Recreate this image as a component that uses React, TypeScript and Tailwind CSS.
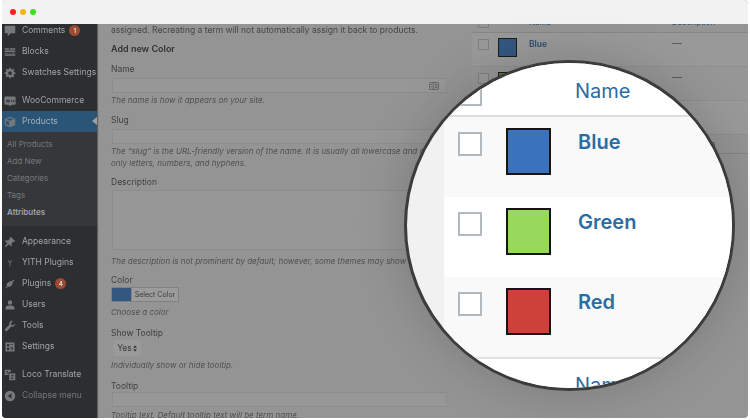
const ui = "[font-family:Inter,'Liberation_Sans',sans-serif]";

function Glyph({ d, dim }: { d: string; dim?: boolean }) {
  return (
    <svg viewBox="0 0 16 16" className={`h-3 w-3 ${dim ? "fill-[#5f6164]" : "fill-[#76797c]"}`}>
      <path d={d} />
    </svg>
  );
}

const icons: Record<string, string> = {
  comments: "M2 1h12a1 1 0 0 1 1 1v8a1 1 0 0 1-1 1H9l-4 4v-4H2a1 1 0 0 1-1-1V2a1 1 0 0 1 1-1z",
  blocks: "M1 3h6v2H1zM8 3h7v2H8zM1 6h14v2H1zM1 9h4v1H1zM6 9h3v1H6zM10 9h5v1h-5zM1 11h14v2H1z",
  gear: "M7 1h2l.4 2 1.3.5 1.7-1.1 1.4 1.4-1.1 1.7.5 1.3 2 .4v2l-2 .4-.5 1.3 1.1 1.7-1.4 1.4-1.7-1.1-1.3.5L9 15H7l-.4-2-1.3-.5-1.7 1.1-1.4-1.4 1.1-1.7-.5-1.3L1 9V7l2-.4.5-1.3-1.1-1.7 1.4-1.4 1.7 1.1L6.600 3zM8 5.500a2.500 2.500 0 1 0 0 5 2.500 2.500 0 0 0 0-5z",
  woo: "M2 2h12a1.500 1.500 0 0 1 1.500 1.500v8A1.500 1.500 0 0 1 14 13h-4l-2 2-2-2H2a1.500 1.500 0 0 1-1.500-1.500v-8A1.500 1.500 0 0 1 2 2zm1 4v4h1l.8-2 .7 2h1L8 6H7l-.7 2-.7-2h-.8L4 8l-.5-2zm6 1v2h2V7zm3 0v2h2V7z",
  box: "M8 1l7 3v8l-7 3-7-3V4zM8 2.600L3.500 4.500 8 6.400l4.500-1.900zM2.500 5.700v5.300L7 13V7.600z",
  pin: "M9 1l6 6-1.500 1-1-.5L10 10l.5 3-1 1-3-3-4 3.500L1 14l3.500-4.500-3-3 1-1 3 .5L8 3.500 7.500 2.500z",
  yith: "M5 4h1.500L8 7l1.500-3H11L8.500 9l.5 1-1.500 3-1-.5L7.500 10z",
  plug: "M13 2l1 1-3 3 1 1-3 4c-1.500 1-3 .8-4 .2L3 14l-1-1 2-2c-.6-1-.8-2.500.2-4l4-3 1 1z",
  user: "M8 1.500a3 3 0 1 1 0 6 3 3 0 0 1 0-6zM2 14v-2c0-2 2-3.500 4-3.500h4c2 0 4 1.500 4 3.500v2z",
  wrench: "M11 1a4 4 0 0 0-3.800 5.200L1.500 12a1.800 1.800 0 0 0 2.500 2.500l5.800-5.700A4 4 0 0 0 15 4.500L12.500 7 10 6.500 9.500 4 12 1.300A4 4 0 0 0 11 1z",
  settings: "M2 2h12v12H2zm2 2v3h3V4zm5 0v1h3V4zM9 7v5h1V7zm2 1v4h1V8zm-7 1v3h3V9z",
  loco: "M1 1h8v3H6v4H1zm2 2v1h1v1H3v1h2V3zM7 6h8v9H7zm2.500 2v1H12L9 12v1h4v-1h-2.500L13 9V8z",
  collapse: "M8 1a7 7 0 1 1 0 14A7 7 0 0 1 8 1zm2 3.500L5 8l5 3.500z",
};

function Badge({ n }: { n: number }) {
  return (
    <span className="ml-[4px] flex h-[11px] w-[11px] items-center justify-center rounded-full bg-[#9c4a30] text-[6px] font-bold text-[#d8d8d8]">
      {n}
    </span>
  );
}

function MenuItem({ icon, label, badge, active, muted, dim }: { icon: string; label: string; badge?: number; active?: boolean; muted?: boolean; dim?: boolean }) {
  return (
    <div className={`relative flex h-[21px] items-center pl-[2px] ${active ? "bg-[#2b5576]" : ""}`}>
      <span className="mr-[6px] flex w-3 justify-center"><Glyph d={icons[icon]} dim={dim} /></span>
      <span className={`whitespace-nowrap text-[8.5px] ${muted ? "text-[#75787b]" : active ? "text-[#a3afb9]" : "text-[#a2a4a6]"}`}>{label}</span>
      {badge ? <Badge n={badge} /> : null}
      {active ? <span className="absolute right-0 top-[6px] border-y-[4px] border-r-[5px] border-y-transparent border-r-[#a0a0a0]" /> : null}
    </div>
  );
}

function Sidebar() {
  return (
    <aside className="w-[95px] shrink-0 overflow-hidden bg-[#2c2e31] shadow-[1px_0_1px_rgba(0,0,0,0.35)]">
      <div className="mt-[-4px]">
        <MenuItem icon="comments" label="Comments" badge={1} />
        <MenuItem icon="blocks" label="Blocks" />
        <MenuItem icon="gear" label="Swatches Settings" />
      </div>
      <div className="mt-[7px]">
        <MenuItem icon="woo" label="WooCommerce" />
        <MenuItem icon="box" label="Products" active />
      </div>
      <div className="flex flex-col bg-[#35373a] pb-[5px] pl-[5px] pt-[4px] text-[8px] leading-[17px] text-[#77797c]">
        <span>All Products</span>
        <span>Add New</span>
        <span>Categories</span>
        <span>Tags</span>
        <span className="font-semibold text-[#a2a4a6]">Attributes</span>
      </div>
      <div className="mt-[5px]">
        <MenuItem icon="pin" label="Appearance" />
        <MenuItem icon="yith" label="YITH Plugins" dim />
        <MenuItem icon="plug" label="Plugins" badge={4} />
        <MenuItem icon="user" label="Users" />
        <MenuItem icon="wrench" label="Tools" />
        <MenuItem icon="settings" label="Settings" />
      </div>
      <div className="mt-[7px]">
        <MenuItem icon="loco" label="Loco Translate" />
        <MenuItem icon="collapse" label="Collapse menu" muted />
      </div>
    </aside>
  );
}

function Label({ children, className = "" }: { children: string; className?: string }) {
  return <div className={`text-[8.5px] leading-[11px] text-[#3f3f3f] ${className}`}>{children}</div>;
}

function Help({ children, className = "" }: { children: string; className?: string }) {
  return <div className={`whitespace-nowrap text-[8px] italic leading-[12px] text-[#505050] ${className}`}>{children}</div>;
}

function Field({ className = "", children }: { className?: string; children?: React.ReactNode }) {
  return <div className={`ml-[1px] flex w-[335px] items-center justify-end border border-[#8d8d8d] bg-[#979797] pr-[7px] ${className}`}>{children}</div>;
}

function Form() {
  return (
    <main className="w-[375px] shrink-0 overflow-hidden pl-[14px] pt-[1px]">
      <div className="whitespace-nowrap text-[8.5px] leading-[11px] text-[#464646]">
        assigned. Recreating a term will not automatically assign it back to products.
      </div>
      <div className="mt-[7px] text-[9px] font-semibold leading-[11px] text-[#333333]">Add new Color</div>
      <Label className="mt-[10px]">Name</Label>
      <Field className="mt-[3px] h-[15px]">
        <svg viewBox="0 0 12 10" className="h-[8px] w-[10px] fill-none stroke-[#555555]"><rect x="0.5" y="0.5" width="11" height="9" rx="1" /><path d="M5 1v8M7 3h3M7 5h3M7 7h3M2 3h1.500M2 6h1.500" /></svg>
      </Field>
      <Help className="mt-[1px]">The name is how it appears on your site.</Help>
      <Label className="mt-[9px]">Slug</Label>
      <Field className="mt-[3px] h-[15px]" />
      <Help className="mt-[1px]">The “slug” is the URL-friendly version of the name. It is usually all lowercase and contains</Help>
      <Help>only letters, numbers, and hyphens.</Help>
      <Label className="mt-[8px]">Description</Label>
      <Field className="mt-[2px] h-[60px]" />
      <Help className="mt-[5px]">The description is not prominent by default; however, some themes may show it.</Help>
      <Label className="mt-[8px]">Color</Label>
      <div className="mt-[1px] flex h-[15px] w-[68px] overflow-hidden rounded-[1px] border border-[#808080] bg-[#9b9b9b]">
        <span className="w-[19px] bg-[#33577f]" />
        <span className="flex-1 border-l border-[#858585] text-center text-[7px] leading-[13px] text-[#3c3c3c]">Select Color</span>
      </div>
      <Help className="mt-[4px]">Choose a color</Help>
      <Label className="mt-[10px]">Show Tooltip</Label>
      <div className="ml-[2px] mt-[1px] flex h-[16px] w-[28px] items-center justify-center gap-[1px] rounded-[2px] bg-[#9a9a9a] text-[8.5px] text-[#3a3a3a]">
        Yes
        <svg viewBox="0 0 6 10" className="h-[7px] w-[4px] fill-[#3a3a3a]"><path d="M3 0l3 4H0zM3 10L0 6h6z" /></svg>
      </div>
      <Help className="mt-[3px]">Individually show or hide tooltip.</Help>
      <Label className="mt-[10px]">Tooltip</Label>
      <Field className="h-[15px]" />
      <Help className="mt-[2px]">Tooltip text. Default tooltip text will be term name.</Help>
    </main>
  );
}

function BackRow({ swatch, name, odd }: { swatch: string; name: string; odd?: boolean }) {
  return (
    <div className={`flex h-[34px] items-start border-b border-[#8e8e8e] pl-[6px] pt-[5px] ${odd ? "bg-[#999999]" : "bg-[#969696]"}`}>
      <span className="mt-[1px] h-[11px] w-[11px] border border-[#7f7f7f] bg-[#9a9a9a]" />
      <span className={`ml-[9px] h-[19px] w-[19px] border border-[#1c1c1c] ${swatch}`} />
      <span className="ml-[12px] w-[143px] text-[8.5px] font-semibold leading-[12px] text-[#2b4e6d]">{name}</span>
      <span className="mt-[5px] h-[1px] w-[10px] bg-[#5c5c5c]" />
    </div>
  );
}

function BackTable() {
  return (
    <section className="min-w-0 flex-1 overflow-hidden">
      <div className="flex h-[9px] items-end border-b border-[#868686] pl-[6px] text-[8px] leading-[8px] text-[#2b4e6d]">
        <span className="mb-[4px] h-[11px] w-[11px] shrink-0 border border-[#7f7f7f]" />
        <span className="mb-[6px] ml-[40px] w-[143px]">Name</span>
        <span className="mb-[6px]">Description</span>
      </div>
      <BackRow swatch="bg-[#33577f]" name="Blue" odd />
      <BackRow swatch="bg-[#587f3b]" name="Green" />
      <BackRow swatch="bg-[#7f3a33]" name="Red" odd />
      <div className="flex h-[19px] items-center border-b border-[#868686] bg-[#949494] pl-[57px] text-[8px] text-[#2b4e6d]">
        <span className="w-[143px]">Name</span>
        <span>Description</span>
      </div>
    </section>
  );
}

function ZoomRow({ swatch, name, alt }: { swatch: string; name: string; alt?: boolean }) {
  return (
    <div className={`flex h-[80px] shrink-0 items-start pl-[14px] ${alt ? "bg-[#f9f9f9]" : "bg-white"}`}>
      <span className="mt-[15px] h-[24px] w-[24px] border-2 border-[#b4b9be] bg-white" />
      <span className={`ml-[24px] mt-[11px] h-[47px] w-[45px] border-2 border-[#151515] ${swatch}`} />
      <span className="ml-[27px] mt-[11px] text-[20px] font-semibold leading-[28px] text-[#2a6ca3]">{name}</span>
    </div>
  );
}

function Magnifier() {
  return (
    <div className="absolute left-[404px] top-[60px] h-[331px] w-[331px] overflow-hidden rounded-full border-[3px] border-[#3c3c3c] bg-[#f1f1f1] shadow-[0_0_50px_rgba(0,0,0,0.18)]">
      <div className="ml-[37px] flex h-full flex-col">
        <div className="flex h-[54px] shrink-0 items-start border-b-2 border-[#dddddd] bg-white pl-[14px] pt-[17px]">
          <span className="mt-[2px] h-[24px] w-[24px] border-2 border-[#b4b9be] bg-white" />
          <span className="ml-[93px] mt-[-3px] text-[20px] leading-[28px] text-[#2a6ca3]">Name</span>
        </div>
        <ZoomRow swatch="bg-[#3a73bc]" name="Blue" alt />
        <ZoomRow swatch="bg-[#97d95c]" name="Green" />
        <ZoomRow swatch="bg-[#cc423b]" name="Red" alt />
        <div className="flex flex-1 border-t-2 border-[#e2e2e2] bg-white pl-[131px] pt-[12px] text-[20px] leading-[28px] text-[#2a6ca3]">Name</div>
      </div>
    </div>
  );
}

export default function App() {
  return (
    <div className={`${ui} relative h-[420px] w-[750px] overflow-hidden bg-white px-[2px] pb-[2px]`}>
      <div className="flex h-full flex-col overflow-hidden rounded-[4px] bg-[#949494]">
        <header className="flex h-6 shrink-0 items-center gap-[4px] bg-[#f2f2f2] pl-[8px]">
          <span className="h-[6px] w-[6px] rounded-full bg-[#fe1f1f]" />
          <span className="h-[6px] w-[6px] rounded-full bg-[#f5b321]" />
          <span className="h-[6px] w-[6px] rounded-full bg-[#3fe01f]" />
        </header>
        <div className="flex min-h-0 flex-1 overflow-hidden blur-[0.5px]">
          <Sidebar />
          <Form />
          <BackTable />
        </div>
      </div>
      <Magnifier />
    </div>
  );
}
